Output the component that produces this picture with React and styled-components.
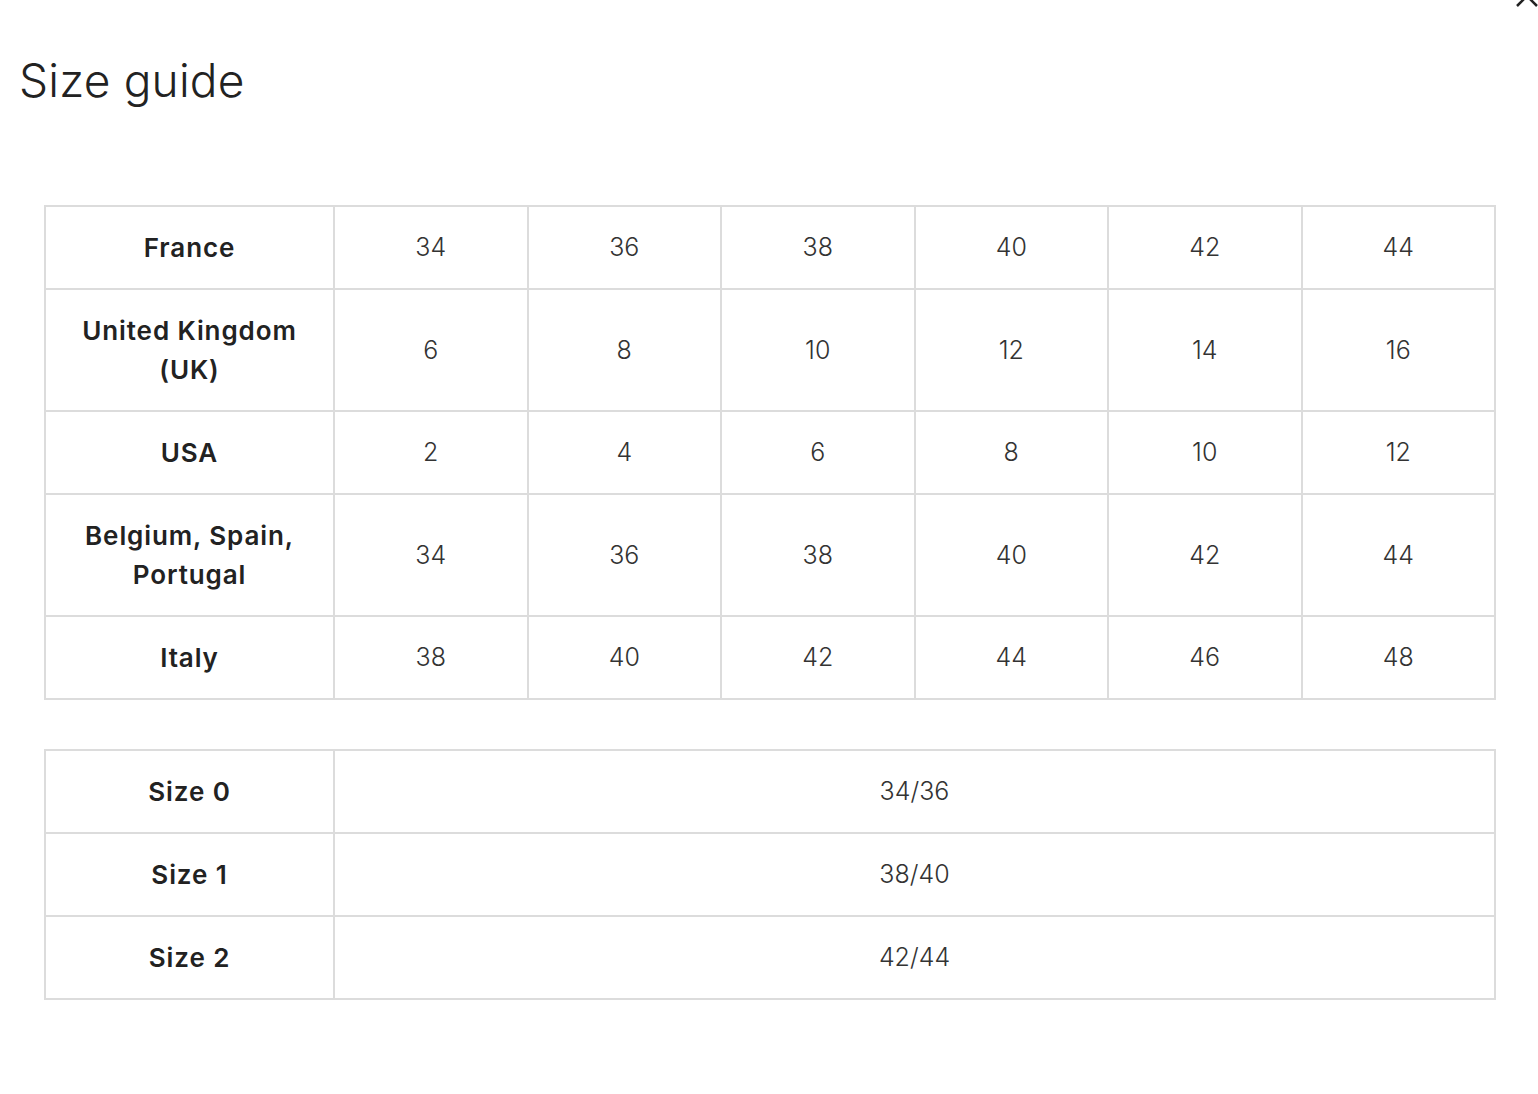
import React from "react";
import styled, { createGlobalStyle } from "styled-components";

const Global = createGlobalStyle`
  html, body { margin: 0; padding: 0; background: #fff; }
  body { font-family: Inter, "Liberation Sans", Arial, sans-serif; color: #222; }
`;

const Modal = styled.div`
  position: relative;
  width: 1538px;
  min-height: 1094px;
  box-sizing: border-box;
  padding: 52px 42px 60px 44px;
  overflow: hidden;
`;

const Close = styled.button`
  position: absolute;
  top: -16px;
  right: -1px;
  width: 24px;
  height: 24px;
  border: 0;
  background: none;
  padding: 0;
  cursor: pointer;
`;

const Title = styled.h1`
  margin: 0 0 0 -25px;
  font-size: 46px;
  line-height: 56px;
  font-weight: 300;
  color: #222;
  letter-spacing: 0.2px;
`;

const Table = styled.table`
  width: 100%;
  border-collapse: collapse;
  table-layout: fixed;
  margin-top: ${(p) => p.$top}px;
`;

const LabelCol = styled.col`
  width: 289px;
`;

const Label = styled.th`
  border: 2px solid #dcdcdc;
  padding: 21px 30px;
  font-size: 26px;
  line-height: 39px;
  font-weight: 600;
  letter-spacing: 0.9px;
  color: #222;
  text-align: center;
`;

const Cell = styled.td`
  border: 2px solid #dcdcdc;
  padding: 21px 10px;
  font-size: 25px;
  line-height: 39px;
  font-weight: 300;
  color: #333;
  text-align: center;
`;

const sizes = [
  ["France", ["34", "36", "38", "40", "42", "44"]],
  ["United Kingdom (UK)", ["6", "8", "10", "12", "14", "16"]],
  ["USA", ["2", "4", "6", "8", "10", "12"]],
  ["Belgium, Spain, Portugal", ["34", "36", "38", "40", "42", "44"]],
  ["Italy", ["38", "40", "42", "44", "46", "48"]],
];

const groups = [
  ["Size 0", "34/36"],
  ["Size 1", "38/40"],
  ["Size 2", "42/44"],
];

export default function App() {
  return (
    <>
      <Global />
      <Modal>
        <Close aria-label="Close">
          <svg width="24" height="24" viewBox="0 0 24 24">
            <path d="M2 2 L22 22 M22 2 L2 22" stroke="#222" strokeWidth="2.5" fill="none" />
          </svg>
        </Close>
        <Title>Size guide</Title>
        <Table $top={97}>
          <colgroup>
            <LabelCol />
          </colgroup>
          <tbody>
            {sizes.map(([name, vals]) => (
              <tr key={name}>
                <Label>{name}</Label>
                {vals.map((v, i) => (
                  <Cell key={i}>{v}</Cell>
                ))}
              </tr>
            ))}
          </tbody>
        </Table>
        <Table $top={49}>
          <colgroup>
            <LabelCol />
          </colgroup>
          <tbody>
            {groups.map(([name, val]) => (
              <tr key={name}>
                <Label>{name}</Label>
                <Cell>{val}</Cell>
              </tr>
            ))}
          </tbody>
        </Table>
      </Modal>
    </>
  );
}
